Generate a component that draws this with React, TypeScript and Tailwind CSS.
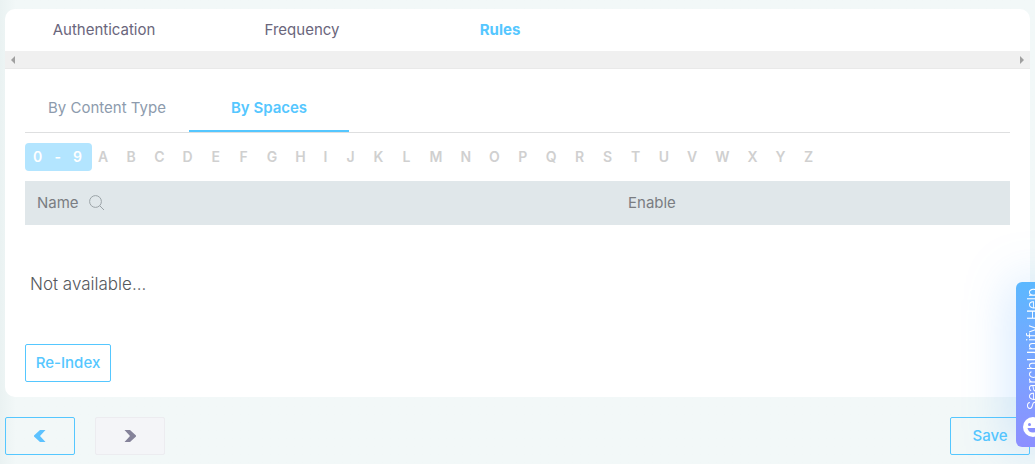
import { useState } from 'react';
import { clsx } from 'clsx';

const STEPS = ['Authentication', 'Frequency', 'Rules'];
const SUB_TABS = ['By Content Type', 'By Spaces'];
const LETTERS = 'ABCDEFGHIJKLMNOPQRSTUVWXYZ'.split('');

function StepTabs({ active, onSelect }: { active: string; onSelect: (step: string) => void }) {
  return (
    <>
      <nav className="flex h-[42px] items-center">
        {STEPS.map((step) => (
          <button
            key={step}
            onClick={() => onSelect(step)}
            className={clsx(
              'w-[198px] text-center text-[15px] leading-5',
              step === active ? 'font-bold text-[#55c7ff]' : 'text-[#6a667c]'
            )}
          >
            {step}
          </button>
        ))}
      </nav>
      {/* Scroll track */}
      <div className="flex h-[18px] items-center justify-between border-b border-[#e9e9e9] bg-[#f0f0f0] px-1.5">
        <svg width="4" height="8" viewBox="0 0 4 8" fill="#a0a0a0"><path d="M4 0v8L0 4z" /></svg>
        <svg width="4" height="8" viewBox="0 0 4 8" fill="#a0a0a0"><path d="M0 0v8l4-4z" /></svg>
      </div>
    </>
  );
}

function AlphabetFilter() {
  return (
    <div className="mt-2.5 flex text-sm font-semibold leading-7 text-[#d0d0d0]">
      <button className="flex h-7 w-[67px] justify-between rounded bg-[#b3e5ff] pl-2 pr-2.5 text-white">
        <span>0</span>
        <span>-</span>
        <span>9</span>
      </button>
      {LETTERS.map((letter) => (
        <button
          key={letter}
          className={clsx(
            letter === 'A' ? 'pl-1.5 pr-[9px]' : 'px-[9px]',
            letter !== 'A' && letter !== 'I' && 'min-w-7'
          )}
        >
          {letter}
        </button>
      ))}
    </div>
  );
}

function SpacesTable() {
  return (
    <table className="mt-2.5 w-full table-fixed text-left">
      <thead>
        <tr className="h-11 bg-[#e0e7ea] text-[15px] text-[#7a7d82]">
          <th className="w-3/5 px-3 font-normal">
            <div className="flex items-center gap-2.5">
              Name
              <button aria-label="Search name">
                <svg width="16" height="16" viewBox="0 0 16 16" fill="none" stroke="#9ba3a7">
                  <circle cx="6.5" cy="6.5" r="5.9" />
                  <path d="M10.8 10.8 15 15" />
                </svg>
              </button>
            </div>
          </th>
          <th className="px-3 font-normal">Enable</th>
        </tr>
      </thead>
      <tbody>
        <tr className="h-[119px]">
          <td colSpan={2} className="px-[5px] text-[17px] font-light text-[#55585c]">Not available...</td>
        </tr>
      </tbody>
    </table>
  );
}

function HelpWidget() {
  return (
    <button className="fixed -right-[15px] top-[282px] flex h-[165px] w-[34px] flex-col items-center justify-between rounded-md bg-linear-to-b from-[#5bb8ff] to-[#8c8fff] pt-1.5 pb-2.5 text-white shadow-[0_0_50px_rgba(90,170,255,0.35)]">
      <span className="rotate-180 whitespace-nowrap text-[15px] font-light leading-5 [writing-mode:vertical-rl]">SearchUnify Help</span>
      <svg width="20" height="20" viewBox="0 0 20 20">
        <circle cx="10" cy="10" r="10" fill="#fff" />
        <circle cx="6.5" cy="7.5" r="1.5" fill="#888fff" />
        <circle cx="13.5" cy="7.5" r="1.5" fill="#888fff" />
        <path d="M4.5 11h11a5.6 5.6 0 0 1-11 0z" fill="#888fff" />
      </svg>
    </button>
  );
}

export default function App() {
  const [step, setStep] = useState('Rules');
  const [subTab, setSubTab] = useState('By Spaces');

  return (
    <div className="min-h-screen overflow-hidden bg-[#f2f8f8] bg-linear-to-r from-[#eaf2f2] to-[#f2f8f8] to-[16px] px-[5px] py-[9px] font-['Inter',sans-serif]">
      <main className="overflow-hidden rounded-[10px] bg-white">
        <StepTabs active={step} onSelect={setStep} />
        <div className="px-5 py-[15px]">
          <div className="flex h-[49px] border-b border-[#dedfe0]">
            {SUB_TABS.map((tab) => (
              <button
                key={tab}
                onClick={() => setSubTab(tab)}
                className={clsx(
                  'border-b-2 pt-0.5 text-[15px] leading-5',
                  tab === 'By Spaces' ? 'w-40' : 'w-[164px]',
                  tab === subTab ? 'border-[#55c7ff] font-semibold text-[#55c7ff]' : 'border-transparent text-[#8d9bad]'
                )}
              >
                {tab}
              </button>
            ))}
          </div>
          <AlphabetFilter />
          <SpacesTable />
          <button className="h-[38px] w-[86px] rounded-xs border border-[#55c7ff] text-[15px] font-medium text-[#55c7ff]">
            Re-Index
          </button>
        </div>
      </main>

      <footer className="mt-5 flex gap-5">
        <button aria-label="Previous" className="flex h-[38px] w-[70px] items-center justify-center rounded-xs border border-[#55c7ff]">
          <svg width="12" height="12" viewBox="0 0 12 12" fill="#5cc2ff"><path d="M6 0h5.5L6 6l5.5 6H6L0 6.6V5.4z" /></svg>
        </button>
        <button aria-label="Next" className="flex h-[38px] w-[70px] items-center justify-center rounded-xs border border-[#ececf0] bg-[#f4f5f8]">
          <svg width="12" height="12" viewBox="0 0 12 12" fill="#85839a"><path d="M6 0H.5L6 6 .5 12H6l6-5.4V5.4z" /></svg>
        </button>
        <button className="ml-auto h-[38px] w-20 rounded-xs border border-[#55c7ff] text-[15px] font-medium text-[#55c7ff]">Save</button>
      </footer>
      <HelpWidget />
    </div>
  );
}
